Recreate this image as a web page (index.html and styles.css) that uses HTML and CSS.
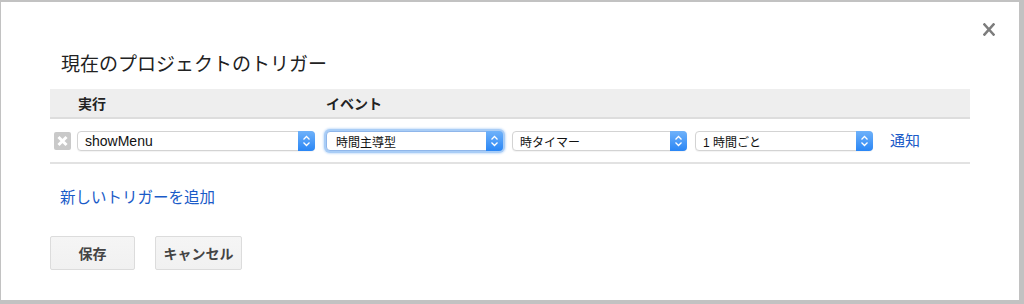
FILE: index.html
```html
<!DOCTYPE html>
<html lang="ja">
<head>
<meta charset="utf-8">
<title>トリガー</title>
<link rel="stylesheet" href="styles.css">
</head>
<body>
<div class="dialog">
  <button class="close" aria-label="閉じる">
    <svg width="12" height="13" viewBox="0 0 12 13"><path d="M1.5 1.5 L10.5 11.5 M10.5 1.5 L1.5 11.5" stroke="#7d7d7d" stroke-width="2.6" stroke-linecap="square"/></svg>
  </button>
  <h1 class="title">現在のプロジェクトのトリガー</h1>
  <div class="table">
    <div class="thead">
      <div class="th th-run">実行</div>
      <div class="th">イベント</div>
    </div>
    <div class="trow">
      <span class="del">
        <svg width="17" height="18" viewBox="0 0 17 18"><path d="M4.5 5 L12.5 13 M12.5 5 L4.5 13" stroke="#fff" stroke-width="3"/></svg>
      </span>
      <div class="sel sel-1"><span class="lat">showMenu</span><span class="arrow"><svg width="9" height="12" viewBox="0 0 9 12"><path d="M1.5 4.5 L4.5 1.5 L7.5 4.5 M1.5 7.5 L4.5 10.5 L7.5 7.5" fill="none" stroke="#fff" stroke-width="1.3"/></svg></span></div>
      <div class="sel sel-2 focus"><span class="jp">時間主導型</span><span class="arrow"><svg width="9" height="12" viewBox="0 0 9 12"><path d="M1.5 4.5 L4.5 1.5 L7.5 4.5 M1.5 7.5 L4.5 10.5 L7.5 7.5" fill="none" stroke="#fff" stroke-width="1.3"/></svg></span></div>
      <div class="sel sel-3"><span class="jp">時タイマー</span><span class="arrow"><svg width="9" height="12" viewBox="0 0 9 12"><path d="M1.5 4.5 L4.5 1.5 L7.5 4.5 M1.5 7.5 L4.5 10.5 L7.5 7.5" fill="none" stroke="#fff" stroke-width="1.3"/></svg></span></div>
      <div class="sel sel-4"><span class="jp">1 時間ごと</span><span class="arrow"><svg width="9" height="12" viewBox="0 0 9 12"><path d="M1.5 4.5 L4.5 1.5 L7.5 4.5 M1.5 7.5 L4.5 10.5 L7.5 7.5" fill="none" stroke="#fff" stroke-width="1.3"/></svg></span></div>
      <a class="link notify" href="#">通知</a>
    </div>
  </div>
  <a class="link add" href="#">新しいトリガーを追加</a>
  <div class="buttons">
    <button class="btn btn-save">保存</button>
    <button class="btn btn-cancel">キャンセル</button>
  </div>
</div>
</body>
</html>
```

FILE: styles.css
```css
html, body {
  margin: 0;
  padding: 0;
}
body {
  background: #c2c2c2;
  width: 1024px;
  height: 304px;
  overflow: hidden;
  font-family: "Liberation Sans", "Noto Sans CJK JP", sans-serif;
  color: #222;
}
.dialog {
  position: relative;
  box-sizing: border-box;
  background: #fff;
  margin: 2px 5px 0 1px;
  height: 298px;
  padding: 51px 0 0 49px;
}
.close {
  position: absolute;
  top: 21px;
  right: 24px;
  width: 12px;
  height: 13px;
  padding: 0;
  border: 0;
  background: none;
  display: block;
}
.close svg { display: block; }
.title {
  margin: 0 0 0 11px;
  font-size: 19px;
  line-height: 24px;
  font-weight: normal;
  color: #222;
}
.table {
  margin-top: 12px;
  width: 920px;
}
.thead {
  display: flex;
  height: 28px;
  align-items: center;
  background: #eeeeee;
  border-bottom: 2px solid #dddddd;
  padding-left: 28px;
}
.th {
  font-size: 14px;
  font-weight: bold;
  color: #222;
}
.th-run { width: 248px; }
.trow {
  display: flex;
  align-items: center;
  padding: 12px 0 11px 4px;
  border-bottom: 2px solid #e2e2e2;
}
.del {
  width: 17px;
  height: 18px;
  background: #c9c9c9;
  border-radius: 2px;
  display: block;
  margin-right: 6px;
}
.del svg { display: block; }
.sel {
  box-sizing: border-box;
  height: 20px;
  display: flex;
  align-items: center;
  background: #fff;
  border: 1px solid #d3d3d3;
  border-radius: 4px;
  padding-left: 7px;
  position: relative;
  box-shadow: 0 1px 1px rgba(0,0,0,0.05);
}
.sel .lat {
  font-size: 14px;
  color: #111;
  flex: 1;
}
.sel .jp {
  font-size: 12px;
  color: #111;
  flex: 1;
}
.arrow {
  width: 17px;
  height: 20px;
  margin: -1px -1px -1px 0;
  border-radius: 0 4px 4px 0;
  background: linear-gradient(#6fb2fa, #2a86f5);
  display: flex;
  align-items: center;
  justify-content: center;
}
.arrow svg { display: block; }
.sel-1 { width: 238px; }
.sel-2 {
  width: 177px;
  margin-left: 11px;
  padding-left: 9px;
  border-color: #8fb6ea;
  box-shadow: 0 0 0 2px #a9cdf6, 0 0 2px 3px #cfe3fb;
}
.sel-3 { width: 175px; margin-left: 9px; }
.sel-4 { width: 178px; margin-left: 8px; }
.link {
  color: #1a5bc8;
  text-decoration: none;
  font-size: 15px;
}
.notify {
  margin-left: 17px;
  line-height: 20px;
}
.add {
  display: block;
  margin: 24px 0 0 10px;
  line-height: 20px;
  width: max-content;
  font-size: 15.5px;
}
.buttons {
  display: flex;
  gap: 20px;
  margin-top: 28px;
  margin-left: 0;
}
.btn {
  box-sizing: border-box;
  height: 34px;
  border: 1px solid #dcdcdc;
  border-radius: 2px;
  background: linear-gradient(#f5f5f5, #f1f1f1);
  font-family: "Liberation Sans", "Noto Sans CJK JP", sans-serif;
  font-size: 14px;
  font-weight: bold;
  color: #444;
  padding: 0;
}
.btn-save { width: 85px; }
.btn-cancel { width: 87px; }
```
